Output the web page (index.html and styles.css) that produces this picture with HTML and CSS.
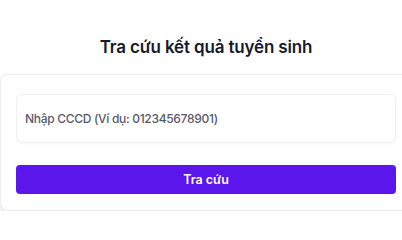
FILE: index.html
```html
<!DOCTYPE html>
<html lang="vi">
<head>
<meta charset="utf-8">
<title>Tra cứu kết quả tuyển sinh</title>
<link rel="stylesheet" href="styles.css">
</head>
<body>
<main class="page">
  <h1 class="title">Tra cứu kết quả tuyển sinh</h1>
  <form class="card">
    <input class="field" type="text" placeholder="Nhập CCCD (Ví dụ: 012345678901)">
    <button class="submit" type="button">Tra cứu</button>
  </form>
</main>
</body>
</html>
```
FILE: styles.css
```css
html, body {
  margin: 0;
  padding: 0;
  background: #ffffff;
  overflow: hidden;
}
.page {
  width: 412px;
  font-family: Inter, "Noto Sans", sans-serif;
  display: flex;
  flex-direction: column;
}
.title {
  margin: 0;
  padding-top: 36px;
  height: 38px;
  text-align: center;
  font-size: 17px;
  font-weight: 600;
  line-height: 22px;
  color: #171a2c;
  letter-spacing: -0.15px;
}
.card {
  margin: 0;
  background: #fff;
  border: 1px solid #ececf1;
  border-radius: 8px;
  box-shadow: 0 3px 6px rgba(0,0,0,0.1);
  padding: 19px 15px 16px;
  display: flex;
  flex-direction: column;
  gap: 22px;
}
.field {
  box-sizing: border-box;
  height: 49px;
  width: 100%;
  border: 1px solid #f1f1f4;
  border-radius: 6px;
  box-shadow: 0 1px 2px rgba(0,0,0,0.03);
  padding: 0 8px;
  font-family: inherit;
  font-size: 12px;
  font-weight: 500;
  letter-spacing: -0.3px;
  color: #1f2130;
  outline: none;
}
.field::placeholder {
  color: #585a68;
  opacity: 1;
}
.submit {
  height: 29px;
  width: 100%;
  border: none;
  border-radius: 4px;
  background: #5b16ec;
  color: #fff;
  font-family: inherit;
  font-size: 12.5px;
  font-weight: 600;
  cursor: pointer;
}
```
